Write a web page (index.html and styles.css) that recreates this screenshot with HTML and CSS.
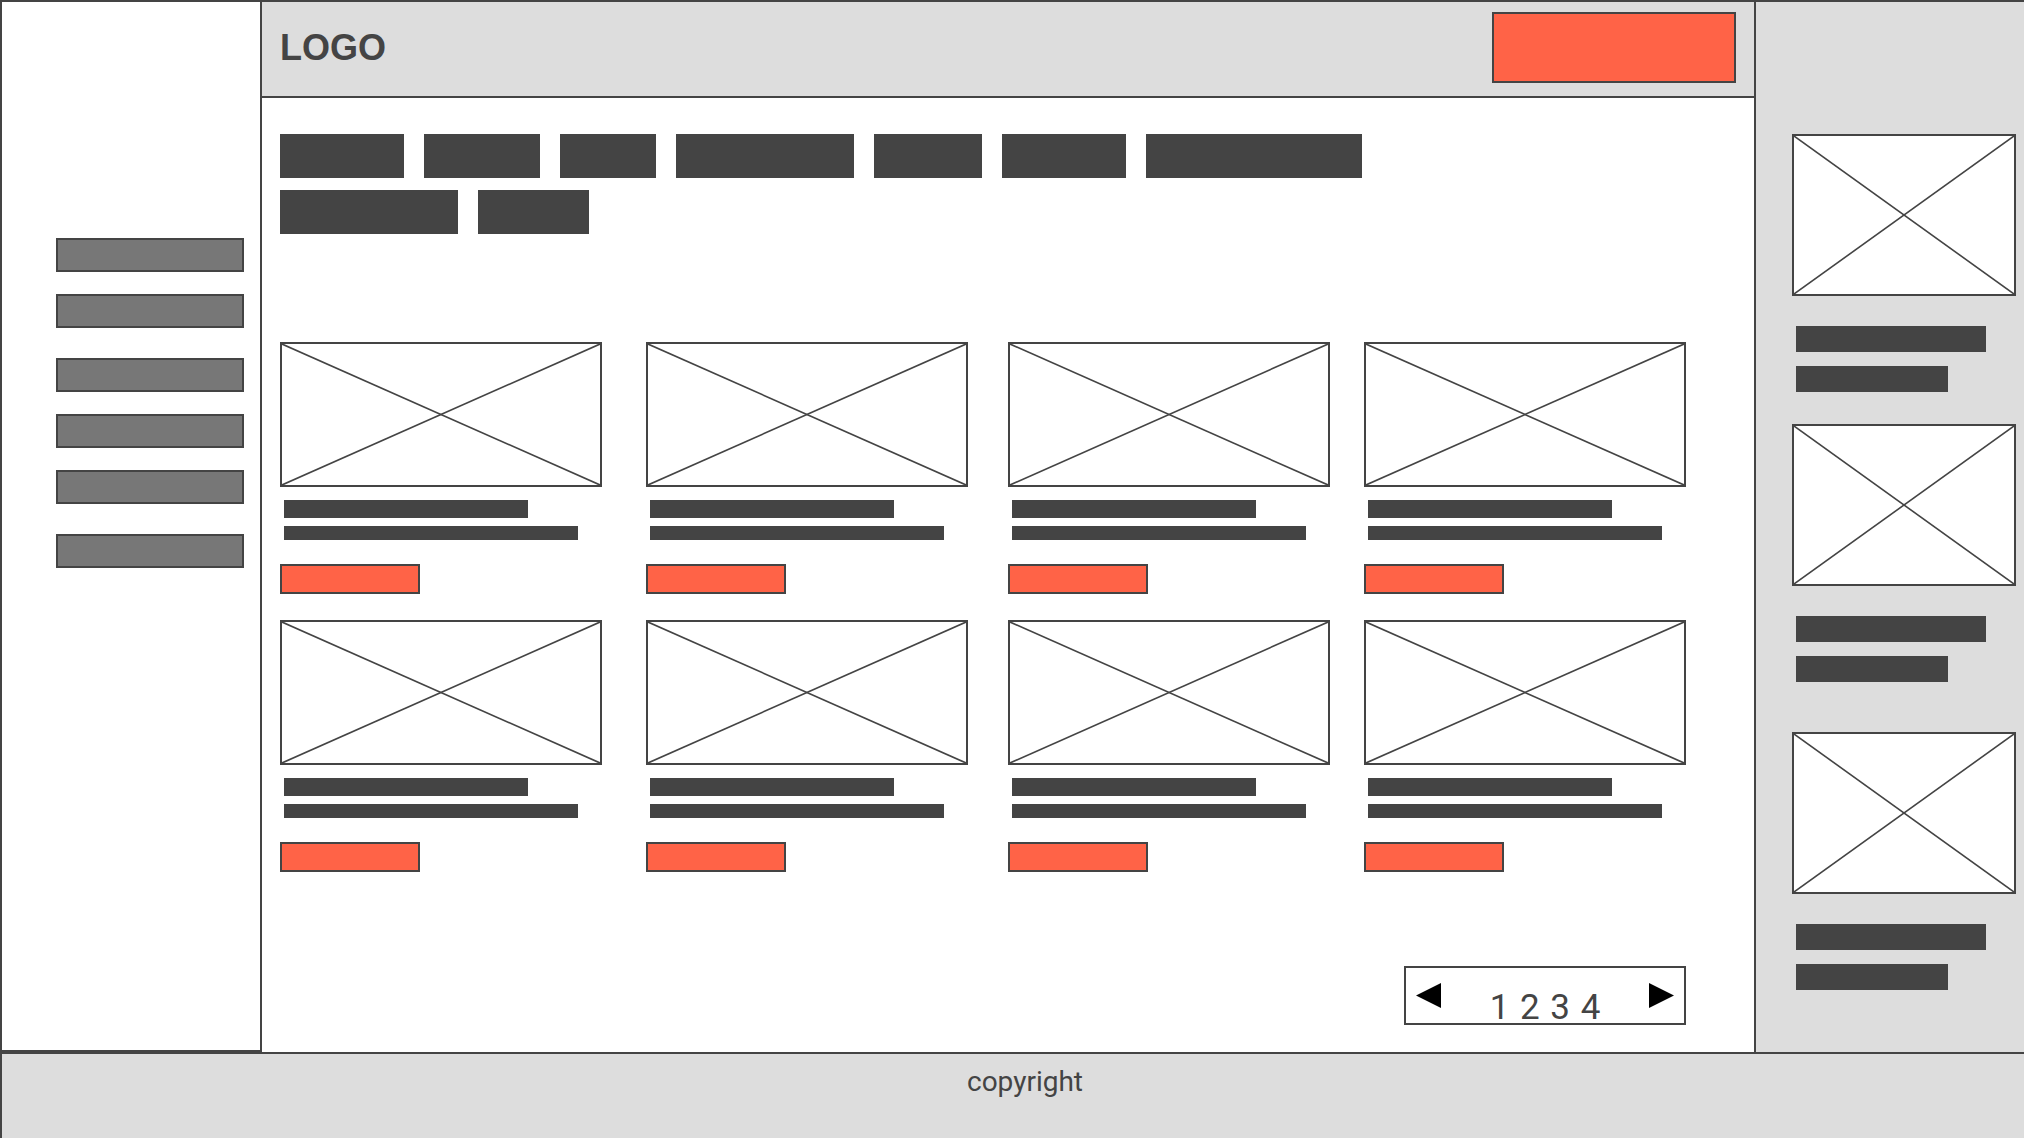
FILE: index.html
```html
<!DOCTYPE html>
<html lang="en">
<head>
<meta charset="utf-8">
<title>Wireframe</title>
<link rel="stylesheet" href="styles.css">
</head>
<body>
<div class="page">
  <div class="body-row">
    <aside class="left">
      <div class="sbar"></div>
      <div class="sbar"></div>
      <div class="sbar sbar-sep"></div>
      <div class="sbar"></div>
      <div class="sbar"></div>
      <div class="sbar sbar-sep"></div>
    </aside>

    <main class="main">
      <header class="header">
        <div class="logo">LOGO</div>
        <div class="cta"></div>
      </header>

      <div class="content">
        <div class="tags">
          <div class="tag-row">
            <span class="tag w124"></span>
            <span class="tag w116"></span>
            <span class="tag w96"></span>
            <span class="tag w178"></span>
            <span class="tag w108"></span>
            <span class="tag w124"></span>
            <span class="tag w216"></span>
          </div>
          <div class="tag-row">
            <span class="tag w178"></span>
            <span class="tag w111"></span>
          </div>
        </div>

        <div class="grid">
          <div class="card">
            <svg class="ph" viewBox="0 0 100 100" preserveAspectRatio="none"><line x1="0" y1="0" x2="100" y2="100"/><line x1="100" y1="0" x2="0" y2="100"/></svg>
            <div class="t1"></div><div class="t2"></div><div class="btn"></div>
          </div>
          <div class="card">
            <svg class="ph" viewBox="0 0 100 100" preserveAspectRatio="none"><line x1="0" y1="0" x2="100" y2="100"/><line x1="100" y1="0" x2="0" y2="100"/></svg>
            <div class="t1"></div><div class="t2"></div><div class="btn"></div>
          </div>
          <div class="card">
            <svg class="ph" viewBox="0 0 100 100" preserveAspectRatio="none"><line x1="0" y1="0" x2="100" y2="100"/><line x1="100" y1="0" x2="0" y2="100"/></svg>
            <div class="t1"></div><div class="t2"></div><div class="btn"></div>
          </div>
          <div class="card">
            <svg class="ph" viewBox="0 0 100 100" preserveAspectRatio="none"><line x1="0" y1="0" x2="100" y2="100"/><line x1="100" y1="0" x2="0" y2="100"/></svg>
            <div class="t1"></div><div class="t2"></div><div class="btn"></div>
          </div>
          <div class="card">
            <svg class="ph" viewBox="0 0 100 100" preserveAspectRatio="none"><line x1="0" y1="0" x2="100" y2="100"/><line x1="100" y1="0" x2="0" y2="100"/></svg>
            <div class="t1"></div><div class="t2"></div><div class="btn"></div>
          </div>
          <div class="card">
            <svg class="ph" viewBox="0 0 100 100" preserveAspectRatio="none"><line x1="0" y1="0" x2="100" y2="100"/><line x1="100" y1="0" x2="0" y2="100"/></svg>
            <div class="t1"></div><div class="t2"></div><div class="btn"></div>
          </div>
          <div class="card">
            <svg class="ph" viewBox="0 0 100 100" preserveAspectRatio="none"><line x1="0" y1="0" x2="100" y2="100"/><line x1="100" y1="0" x2="0" y2="100"/></svg>
            <div class="t1"></div><div class="t2"></div><div class="btn"></div>
          </div>
          <div class="card">
            <svg class="ph" viewBox="0 0 100 100" preserveAspectRatio="none"><line x1="0" y1="0" x2="100" y2="100"/><line x1="100" y1="0" x2="0" y2="100"/></svg>
            <div class="t1"></div><div class="t2"></div><div class="btn"></div>
          </div>
        </div>

        <div class="pager-row">
          <div class="pager">
            <svg class="arrow" viewBox="0 0 25 25"><polygon points="0,12.5 25,0 25,25"/></svg>
            <span class="pages">1 2 3 4</span>
            <svg class="arrow" viewBox="0 0 25 25"><polygon points="25,12.5 0,0 0,25"/></svg>
          </div>
        </div>
      </div>
    </main>

    <aside class="right">
      <svg class="ph side" viewBox="0 0 100 100" preserveAspectRatio="none"><line x1="0" y1="0" x2="100" y2="100"/><line x1="100" y1="0" x2="0" y2="100"/></svg>
      <div class="rb long"></div>
      <div class="rb short"></div>
      <svg class="ph side mid" viewBox="0 0 100 100" preserveAspectRatio="none"><line x1="0" y1="0" x2="100" y2="100"/><line x1="100" y1="0" x2="0" y2="100"/></svg>
      <div class="rb long"></div>
      <div class="rb short"></div>
      <svg class="ph side last" viewBox="0 0 100 100" preserveAspectRatio="none"><line x1="0" y1="0" x2="100" y2="100"/><line x1="100" y1="0" x2="0" y2="100"/></svg>
      <div class="rb long"></div>
      <div class="rb short"></div>
    </aside>
  </div>

  <footer class="footer">copyright</footer>
</div>
</body>
</html>
```

FILE: styles.css
```css
* { box-sizing: border-box; }

html, body {
  margin: 0;
  padding: 0;
  background: #ffffff;
}

body {
  width: 2024px;
  height: 1138px;
  overflow: hidden;
  font-family: "Liberation Sans", Arial, sans-serif;
  color: #444444;
}

.page {
  width: 2024px;
  height: 1138px;
  border-top: 2px solid #444444;
  border-left: 2px solid #444444;
  display: flex;
  flex-direction: column;
}

.body-row {
  height: 1050px;
  display: flex;
}

/* left sidebar */
.left {
  width: 260px;
  height: 1050px;
  border-right: 2px solid #444444;
  border-bottom: 2px solid #444444;
  background: #ffffff;
  padding: 236px 0 0 54px;
  display: flex;
  flex-direction: column;
}

.sbar {
  width: 188px;
  height: 34px;
  background: #777777;
  border: 2px solid #444444;
  margin-top: 22px;
}
.sbar:first-child { margin-top: 0; }
.sbar-sep { margin-top: 30px; }

/* main column */
.main {
  width: 1494px;
  border-right: 2px solid #444444;
  display: flex;
  flex-direction: column;
  background: #ffffff;
}

.header {
  height: 96px;
  background: #dddddd;
  border-bottom: 2px solid #444444;
  display: flex;
  justify-content: space-between;
  align-items: flex-start;
  padding: 0 18px;
}

.logo {
  margin-top: 28px;
  font-family: "Liberation Sans", Arial, sans-serif;
  font-weight: bold;
  font-size: 36px;
  line-height: 36px;
  color: #444444;
}

.cta {
  margin-top: 10px;
  width: 244px;
  height: 71px;
  background: #ff6347;
  border: 2px solid #444444;
}

.content {
  padding: 36px 68px 0 18px;
  display: flex;
  flex-direction: column;
}

.tags {
  display: flex;
  flex-direction: column;
  gap: 12px;
}

.tag-row {
  display: flex;
  gap: 20px;
}

.tag {
  display: block;
  height: 44px;
  background: #444444;
}
.w96 { width: 96px; }
.w108 { width: 108px; }
.w111 { width: 111px; }
.w116 { width: 116px; }
.w124 { width: 124px; }
.w178 { width: 178px; }
.w216 { width: 216px; }

.grid {
  margin-top: 108px;
  display: grid;
  grid-template-columns: 366px 362px 356px 322px;
  row-gap: 26px;
}

.card {
  width: 322px;
  display: flex;
  flex-direction: column;
}

.ph {
  display: block;
  width: 322px;
  height: 145px;
  border: 2px solid #444444;
  background: #ffffff;
}

.ph line {
  stroke: #444444;
  stroke-width: 1.6;
  vector-effect: non-scaling-stroke;
}

.t1 {
  margin: 13px 0 0 4px;
  width: 244px;
  height: 18px;
  background: #444444;
}

.t2 {
  margin: 8px 0 0 4px;
  width: 294px;
  height: 14px;
  background: #444444;
}

.btn {
  margin-top: 24px;
  width: 140px;
  height: 30px;
  background: #ff6347;
  border: 2px solid #444444;
}

.pager-row {
  margin-top: 94px;
  display: flex;
  justify-content: flex-end;
}

.pager {
  width: 282px;
  height: 59px;
  border: 2px solid #444444;
  background: #ffffff;
  display: flex;
  justify-content: space-between;
  align-items: flex-start;
  padding: 0 10px;
}

.arrow {
  width: 25px;
  height: 25px;
  margin-top: 15px;
  fill: #000000;
}

.pages {
  margin-top: 22px;
  font-family: Roboto, "Liberation Sans", sans-serif;
  font-size: 35px;
  line-height: 35px;
  word-spacing: 2px;
  color: #444444;
  white-space: pre;
}

/* right sidebar */
.right {
  flex: 1;
  background: #dddddd;
  padding: 132px 0 0 36px;
  display: flex;
  flex-direction: column;
}

.ph.side {
  width: 224px;
  height: 162px;
}
.ph.mid { margin-top: 32px; }
.ph.last { margin-top: 50px; }

.rb {
  height: 26px;
  background: #444444;
  margin-left: 4px;
}
.rb.long { width: 190px; margin-top: 30px; }
.rb.short { width: 152px; margin-top: 14px; }

/* footer */
.footer {
  height: 86px;
  border-top: 2px solid #444444;
  background: #dddddd;
  padding: 14px 0 0 24px;
  text-align: center;
  font-family: Roboto, "Liberation Sans", sans-serif;
  font-size: 28px;
  line-height: 28px;
  color: #444444;
}
```
